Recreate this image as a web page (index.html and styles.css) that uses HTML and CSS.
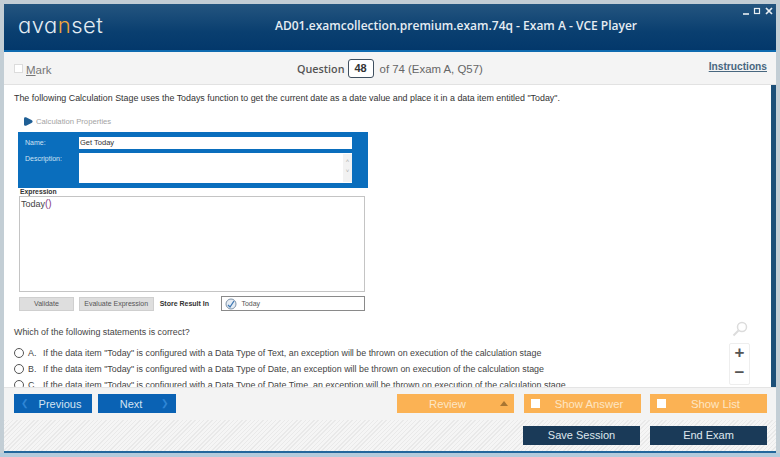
FILE: index.html
```html
<!DOCTYPE html>
<html lang="en">
	<head>
		<meta charset="UTF-8">
		<link rel="stylesheet" href="styles.css">
		<title>VCE Player</title>
	</head>
	<body>
		<div class="window">
			<header class="title-bar">
				<div class="logo">ava<span class="logo-n">n</span>set</div>
				<div class="title">AD01.examcollection.premium.exam.74q - Exam A - VCE Player</div>
				<div class="win-btns">
					<svg width="34" height="10" viewBox="0 0 34 10">
						<path d="M2 8h6" stroke="#e8eef3" stroke-width="1.6"/>
						<rect x="13.5" y="2.5" width="5" height="5" fill="none" stroke="#e8eef3" stroke-width="1.2"/>
						<path d="M25 2l6 6M31 2l-6 6" stroke="#e8eef3" stroke-width="1.7"/>
					</svg>
				</div>
			</header>

			<div class="toolbar">
				<label class="mark"><span class="mark-box"></span><span class="mark-text"><u>M</u>ark</span></label>
				<div class="question">
					<b>Question</b><span class="q-num">48</span><span class="q-of">of 74 (Exam A, Q57)</span>
				</div>
				<a class="instructions">Instructions</a>
			</div>

			<main class="content">
				<div class="scroll-area">
					<p class="q-text">The following Calculation Stage uses the Todays function to get the current date as a date value and place it in a data item entitled "Today".</p>

					<div class="shot">
						<div class="shot-title">
							<svg width="10" height="9" viewBox="0 0 10 9"><path d="M1 1.500C1 .5 2 0 3 .3l5.500 2.700c1.500.8 1.500 2.200 0 3L3 8.700C2 9 1 8.500 1 7.500z" fill="#1f5f95"/></svg>
							<span>Calculation Properties</span>
						</div>
						<div class="shot-blue">
							<div class="shot-row">
								<span class="shot-label">Name:</span>
								<div class="shot-input">Get Today</div>
							</div>
							<div class="shot-row">
								<span class="shot-label">Description:</span>
								<div class="shot-area"><span class="shot-scroll">&#708;<br>&#709;</span></div>
							</div>
						</div>
						<div class="shot-exp-label">Expression</div>
						<div class="shot-exp">Today<span class="paren">()</span></div>
						<div class="shot-actions">
							<div class="shot-btn validate">Validate</div>
							<div class="shot-btn evaluate">Evaluate Expression</div>
							<b class="store">Store Result In</b>
							<div class="store-field">
								<svg width="12" height="12" viewBox="0 0 12 12"><circle cx="6" cy="6" r="5" fill="#e6edf4" stroke="#7f93a8"/><path d="M3 7l2 2 4-6" fill="none" stroke="#3f79b5" stroke-width="1.3"/></svg>
								<span>Today</span>
							</div>
						</div>
					</div>

					<p class="q-ask">Which of the following statements is correct?</p>

					<div class="answer"><span class="radio"></span><span class="letter">A.</span><span>If the data item "Today" is configured with a Data Type of Text, an exception will be thrown on execution of the calculation stage</span></div>
					<div class="answer"><span class="radio"></span><span class="letter">B.</span><span>If the data item "Today" is configured with a Data Type of Date, an exception will be thrown on execution of the calculation stage</span></div>
					<div class="answer"><span class="radio"></span><span class="letter">C.</span><span>If the data item "Today" is configured with a Data Type of Date Time, an exception will be thrown on execution of the calculation stage</span></div>
				</div>
				<div class="scrollbar"></div>

				<div class="zoom-tools">
					<svg class="zoom-glass" width="16" height="16" viewBox="0 0 16 16"><circle cx="10" cy="6" r="4.500" fill="none" stroke="#dcdcdc" stroke-width="1.500"/><path d="M6.500 9.500L1.500 14.500" stroke="#dcdcdc" stroke-width="2"/></svg>
					<div class="zoom-box">
						<div class="zoom-btn">+</div>
						<div class="zoom-btn">&minus;</div>
					</div>
				</div>
			</main>

			<div class="nav-bar">
				<div class="nav-left">
					<div class="btn-blue prev"><span class="chev">&#10094;</span>Previous</div>
					<div class="btn-blue next">Next<span class="chev">&#10095;</span></div>
				</div>
				<div class="nav-right">
					<div class="btn-orange review">Review<span class="tri"></span></div>
					<div class="btn-orange"><span class="tick"></span>Show Answer</div>
					<div class="btn-orange"><span class="tick"></span>Show List</div>
				</div>
			</div>

			<div class="hatch">
				<div class="btn-dark">Save Session</div>
				<div class="btn-dark">End Exam</div>
			</div>
		</div>
	</body>
</html>
```

FILE: styles.css
```css
* {
	box-sizing: border-box;
}
html, body {
	margin: 0;
	width: 780px;
	height: 457px;
	overflow: hidden;
}
body {
	background: #b4cbdc;
	font-family: 'Liberation Sans', Arial, sans-serif;
}
.window {
	width: 780px;
	height: 453px;
	padding: 4px 4px 0 4px;
	background: #c3ced5;
	display: flex;
	flex-direction: column;
	position: relative;
}

/* title */
.title-bar {
	height: 48px;
	flex: none;
	display: flex;
	align-items: center;
	background: linear-gradient(#24557f, #0a3f70 60%, #03386b);
	border-bottom: 2px solid #0f6bb0;
	position: relative;
}
.logo {
	width: 271px;
	padding: 0 0 5px 14px;
	font-family: 'Inter', sans-serif;
	font-feature-settings: "cv11";
	font-weight: 300;
	font-size: 22px;
	letter-spacing: 0.5px;
	color: #e4edf3;
}
.logo-n {
	color: #f0a63c;
}
.title {
	font-size: 12px;
	font-weight: 600;
	color: #e6edf3;
	padding-bottom: 3px;
	font-family: 'Open Sans', sans-serif;
}
.win-btns {
	position: absolute;
	top: 2px;
	right: 1px;
	line-height: 0;
}

/* question bar */
.toolbar {
	height: 33px;
	flex: none;
	display: flex;
	align-items: center;
	background: #f4f4f4;
	border-bottom: 1px solid #e2e2e2;
	color: #666;
	position: relative;
}
.mark {
	display: flex;
	align-items: center;
	gap: 3px;
	margin-left: 10px;
	font-size: 11.500px;
	color: #777;
}
.mark-box {
	width: 9px;
	height: 9px;
	background: #fff;
	border: 1px solid #dcdcdc;
}
.mark-text {
	padding-top: 3px;
}
.question {
	position: absolute;
	left: 293px;
	top: 7px;
	display: flex;
	align-items: center;
	font-size: 11.400px;
	color: #666;
}
.question b {
	color: #555;
	font-family: 'Open Sans', sans-serif;
	font-weight: 600;
	font-size: 10.800px;
}
.q-num {
	width: 26px;
	height: 19px;
	margin: 0 6px 0 3px;
	border: 1px solid #3f4f5f;
	border-radius: 3px;
	background: #fff;
	color: #333;
	font-weight: bold;
	font-size: 11px;
	text-align: center;
	line-height: 17px;
}
.instructions {
	margin-left: auto;
	margin-right: 9px;
	padding-bottom: 3px;
	font-size: 10.200px;
	font-weight: bold;
	color: #48677f;
	text-decoration: underline;
}

/* main area */
.content {
	flex: none;
	height: 302px;
	display: flex;
	background: #fff;
	position: relative;
	overflow: hidden;
}
.scroll-area {
	flex: 1;
	padding: 8px 0 0 10px;
	color: #333;
	font-size: 8.900px;
}
.scrollbar {
	width: 5px;
	flex: none;
	background: #1c4f78;
}
.q-text {
	margin: 0 0 11px;
	line-height: 11px;
}
.shot {
	width: 356px;
	margin-left: 4px;
	color: #555;
}
.shot-title {
	height: 17px;
	padding: 0 0 5px 5px;
	display: flex;
	align-items: center;
	gap: 3px;
	font-size: 7.700px;
	color: #a4a4a4;
}
.shot-blue {
	width: 350px;
	height: 56px;
	padding: 5px 16px 0 7px;
	background: #0a6ebd;
	display: flex;
	flex-direction: column;
	gap: 4px;
}
.shot-row {
	display: flex;
}
.shot-label {
	width: 54px;
	color: #cfe2f3;
	font-size: 7px;
	padding-top: 2px;
}
.shot-input {
	width: 273px;
	height: 12px;
	background: #fff;
	font-size: 7.500px;
	line-height: 12px;
	color: #333;
	padding-left: 1px;
}
.shot-area {
	width: 273px;
	height: 30px;
	background: #fff;
	display: flex;
	justify-content: flex-end;
	align-items: center;
}
.shot-scroll {
	width: 9px;
	font-size: 6px;
	line-height: 10px;
	color: #aaa;
	background: #f2f2f2;
	text-align: center;
	height: 28px;
	padding-top: 2px;
}
.shot-exp-label {
	margin: 0 0 0 2px;
	font-size: 6.800px;
	font-weight: bold;
	color: #333;
	line-height: 8px;
}
.shot-exp {
	width: 346px;
	height: 96px;
	margin-left: 1px;
	padding: 2px 1px;
	border: 1px solid #c4c4c4;
	font-size: 9px;
	color: #444;
	line-height: 10px;
}
.paren {
	color: #8a3f86;
	font-size: 10px;
}
.shot-actions {
	display: flex;
	align-items: center;
	width: 346px;
	margin: 4px 0 0 1px;
	height: 15px;
	font-size: 7px;
}
.shot-btn {
	height: 14px;
	background: #dedede;
	border: 1px solid #cfcfcf;
	color: #555;
	text-align: center;
	line-height: 12px;
}
.validate {
	width: 55px;
	margin-right: 5px;
}
.evaluate {
	width: 75px;
	margin-right: 6px;
}
.store {
	width: 62px;
	color: #333;
}
.store-field {
	width: 144px;
	height: 15px;
	border: 1px solid #8a8a8a;
	display: flex;
	align-items: center;
	gap: 4px;
	padding-left: 3px;
	color: #555;
}
.q-ask {
	margin: 16px 0 7px;
	line-height: 11px;
	color: #444;
}
.answer {
	display: flex;
	align-items: center;
	height: 16px;
	color: #444;
}
.radio {
	width: 10px;
	height: 10px;
	border: 1px solid #555;
	border-radius: 50%;
	margin-right: 4px;
	background: #fff;
}
.letter {
	width: 15px;
}
.zoom-tools {
	position: absolute;
	right: 26px;
	top: 236px;
	width: 21px;
}
.zoom-glass {
	display: block;
	margin: 0 0 6px 3px;
}
.zoom-box {
	border: 1px solid #eeeeee;
	border-radius: 2px;
	background: #fff;
}
.zoom-btn {
	height: 20px;
	font-size: 17px;
	line-height: 18px;
	font-weight: bold;
	text-align: center;
	color: #555;
}

/* footer */
.nav-bar {
	height: 33px;
	flex: none;
	display: flex;
	justify-content: space-between;
	padding: 6px 9px 0 10px;
	background: #f3f3f3;
	border-top: 1px solid #e4e4e4;
}
.nav-left, .nav-right {
	display: flex;
	gap: 6px;
}
.nav-right {
	gap: 9.500px;
}
.btn-blue {
	width: 78px;
	height: 19px;
	display: flex;
	align-items: center;
	justify-content: center;
	background: #0a62b4;
	color: #d3e4f2;
	font-size: 11px;
	position: relative;
}
.chev {
	position: absolute;
	top: 3px;
	font-size: 9px;
	line-height: 13px;
	color: #2f86d6;
}
.prev {
	padding-left: 14px;
}
.prev .chev {
	left: 7px;
}
.next {
	padding-right: 12px;
}
.next .chev {
	right: 7px;
}
.btn-orange {
	width: 117px;
	height: 19px;
	display: flex;
	align-items: center;
	justify-content: center;
	padding-left: 14px;
	background: #fbb254;
	color: #fde6c4;
	font-size: 11.300px;
	position: relative;
}
.review {
	padding: 0 16px 0 0;
}
.tri {
	position: absolute;
	right: 6px;
	top: 7px;
	border-left: 4px solid transparent;
	border-right: 4px solid transparent;
	border-bottom: 5px solid #a87532;
}
.tick {
	position: absolute;
	left: 7px;
	top: 5px;
	width: 9px;
	height: 9px;
	background: #fff;
}
.hatch {
	flex: 1;
	display: flex;
	justify-content: flex-end;
	gap: 10px;
	padding: 6px 9px 0 0;
	background: repeating-linear-gradient(135deg, #e9e9e9 0, #e9e9e9 1px, #f5f5f5 1px, #f5f5f5 3px);
	border-bottom: 2px solid #24679c;
}
.btn-dark {
	width: 117px;
	height: 19px;
	background: #1a3a58;
	color: #dfe7ee;
	font-size: 11px;
	text-align: center;
	line-height: 19px;
}
```
